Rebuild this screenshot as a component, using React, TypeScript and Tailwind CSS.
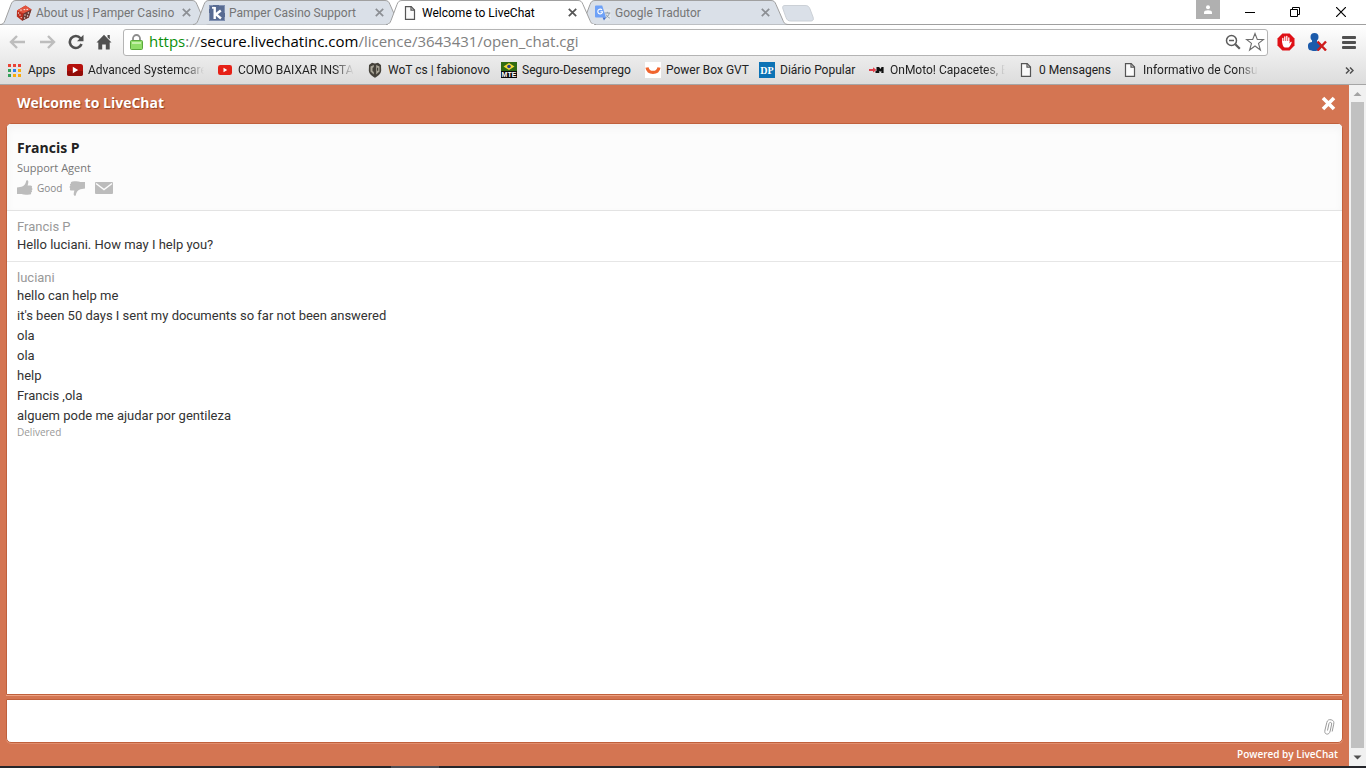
import React from "react";
import clsx from "clsx";

//---------------------
// ICONS
//---------------------
const DiceIcon = () => (
  <svg viewBox="0 0 16 16" className="h-4 w-4 shrink-0">
    <path d="M1 5.5 9.5.5 15.5 4.5 12.8 12.5 6.2 15.8 .8 11.5Z" fill="#b92c1d" />
    <path d="M1 5.5 9.5.5 15.5 4.5 7.5 8.5Z" fill="#e2553f" />
    <path d="M7.5 8.5 15.5 4.5 12.8 12.5 6.2 15.8Z" fill="#6b3a34" />
    <g fill="#f6e4e0">
      <ellipse cx="5" cy="5" rx="1.1" ry=".6" />
      <ellipse cx="8.4" cy="4.6" rx="1" ry=".6" />
      <ellipse cx="11.2" cy="4.3" rx="1" ry=".6" />
      <circle cx="2.5" cy="8" r=".7" />
      <circle cx="4" cy="10" r=".7" />
      <circle cx="5.2" cy="12.6" r=".7" />
      <circle cx="9" cy="10" r=".7" />
      <circle cx="12.4" cy="8" r=".7" />
      <circle cx="8.6" cy="13" r=".7" />
      <circle cx="11.6" cy="11" r=".7" />
    </g>
  </svg>
);

const KayakoIcon = () => (
  <svg viewBox="0 0 16 16" className="h-4 w-4 shrink-0">
    <rect width="16" height="16" rx="1" fill="#586b92" />
    <path d="M.500 4V.500H4M15.500 8V.500H10M.500 8v7.500h15V12" fill="none" stroke="#8292b3" />
    <path d="M5.700 2v12M11.800 5.500 7 9.300l5 4.200" fill="none" stroke="#fff" strokeWidth="2.400" />
    <path d="M3 2.800h3" stroke="#fff" strokeWidth="1.800" />
  </svg>
);

const PageIcon = () => (
  <svg viewBox="0 0 16 16" className="h-4 w-4 shrink-0" fill="none" stroke="#555" strokeWidth="1.2">
    <path d="M3.5 1.6h5.7l3.3 3.4v9.4h-9z" fill="#fafafa" />
    <path d="M9 1.6v3.6h3.5" />
  </svg>
);

const TranslateIcon = () => (
  <svg viewBox="0 0 16 16" className="h-4 w-4 shrink-0">
    <path d="M6.5 4.5H15a1 1 0 0 1 1 1v9a1 1 0 0 1-1 1H9.5z" fill="#e3e7ec" />
    <path d="M9.5 8h5.8M12.3 6.8V8M14.3 8c-.5 2.3-2 4-4 5M11 9.5c.8 1.7 2 2.8 3.8 3.6" fill="none" stroke="#8c9aa8" />
    <path d="M1 .5h6.2L11 12.5H1a1 1 0 0 1-1-1v-10a1 1 0 0 1 1-1z" fill="#6ea1f7" />
    <path d="M7.6 12.5H11l-2 3z" fill="#3f6fd0" />
    <path d="M7 4.9a2.4 2.4 0 1 0 .6 1.8H5.4" fill="none" stroke="#fff" strokeWidth="1.1" />
  </svg>
);

const AppsIcon = () => (
  <svg viewBox="0 0 13 13" className="h-[13px] w-[13px] shrink-0">
    <path d="M0 0h3v3H0zM5 0h3v3H5zM10 0h3v3h-3z" fill="#ea4335" />
    <path d="M0 5h3v3H0zM0 10h3v3H0z" fill="#34a05a" />
    <path d="M5 5h3v3H5z" fill="#2f80ed" />
    <path d="M10 5h3v3h-3zM5 10h3v3H5zM10 10h3v3h-3z" fill="#f9ab0c" />
  </svg>
);

const DarkTubeIcon = () => (
  <svg viewBox="0 0 16 12" className="h-3 w-4 shrink-0">
    <rect width="16" height="12" rx="2.5" fill="#b5100c" />
    <path d="M0 7h16v2.5A2.5 2.5 0 0 1 13.5 12h-11A2.5 2.5 0 0 1 0 9.5z" fill="#930b08" />
    <path d="M5.8 2.8v6.4l5.4-3.2z" fill="#fff" />
  </svg>
);

const TubeIcon = () => (
  <svg viewBox="0 0 16 16" className="h-4 w-4 shrink-0">
    <rect x="1" y="3" width="14" height="10" rx="2.2" fill="#e62117" />
    <path d="M6.5 5.8v4.4l3.7-2.2z" fill="#fff" />
  </svg>
);

const TanksIcon = () => (
  <svg viewBox="0 0 16 16" className="h-4 w-4 shrink-0">
    <path d="M2 3 5 .8l3 .8 3-.8L14 3l.2 5.5C14 12 10.500 14.500 8 15.800 5.500 14.500 2 12 1.800 8.500z" fill="#45423b" />
    <path d="M3.500 4.500 6.800 3v2L5.500 6v3l1.300 1v2.500L3.500 9.500zM9.200 3l3.300 1.500v5l-3.300 3z" fill="#aaa698" />
    <path d="M10.600 5.800v3" stroke="#45423b" strokeWidth="1.200" />
  </svg>
);

const MteIcon = () => (
  <svg viewBox="0 0 16 16" className="h-4 w-4 shrink-0">
    <rect width="16" height="9" fill="#2f6b12" />
    <path d="M8 1l5.500 3.500L8 8 2.500 4.500z" fill="#f5d936" />
    <circle cx="8" cy="4.500" r="1.800" fill="#283f8c" />
    <rect y="9" width="16" height="7" fill="#0a0a0a" />
    <text x="8" y="15" textAnchor="middle" fill="#fff" className="font-['Liberation_Sans',sans-serif] text-[7px] font-bold">MTE</text>
  </svg>
);

const GvtIcon = () => (
  <svg viewBox="0 0 16 16" className="h-4 w-4 shrink-0">
    <rect width="16" height="16" fill="#fff" />
    <path d="M2 5.500c1.200 6.600 10.800 6.600 12 0" fill="none" stroke="#f0652f" strokeWidth="3.200" />
  </svg>
);

const DpIcon = () => (
  <svg viewBox="0 0 16 16" className="h-4 w-4 shrink-0">
    <rect width="16" height="16" fill="#0b72b5" />
    <text x="8" y="12" textAnchor="middle" fill="#fff" className="font-['Liberation_Serif',serif] text-[10px] font-bold">DP</text>
  </svg>
);

const MotoIcon = () => (
  <svg viewBox="0 0 16 16" className="h-4 w-4 shrink-0">
    <path d="M0 7h4V5.300L7.500 8 4 10.500V9H0z" fill="#e0404a" />
    <path d="M7.500 5h2.700l1.200 2 1.200-2h2v6H12.300V8.800l-1 1-1-1V11H6.500V9h1z" fill="#111" />
  </svg>
);

const ThumbIcon = ({ down }: { down?: boolean }) => (
  <svg viewBox="0 0 16 16" className={clsx("h-4 w-4", down && "rotate-180")} fill="#bcbcbc">
    <path d="M0 7.500 4.500 6.800C7 6 8.800 4 9.200.8c.2-1 2-.8 2.100.7.1 1.500-.3 2.700-.7 3.900h2.800c2 0 2 1.900 1.300 2.500 1.200.6.9 2.100-.1 2.400.8.700.4 2-.6 2.200.5.900-.1 2-1.500 2.100-3.200.4-5.700.4-8-.5H0z" />
  </svg>
);

//---------------------
// DATA
//---------------------
const tabs = [
  { title: "About us | Pamper Casino", icon: <DiceIcon /> },
  { title: "Pamper Casino Support", icon: <KayakoIcon /> },
  { title: "Welcome to LiveChat", icon: <PageIcon />, active: true },
  { title: "Google Tradutor", icon: <TranslateIcon /> },
];

const bookmarks = [
  { title: "Apps", icon: <AppsIcon />, width: "w-[46px]", gap: "gap-[7px]" },
  { title: "Advanced Systemcare", icon: <DarkTubeIcon />, width: "w-[137px]", fade: true },
  { title: "COMO BAIXAR INSTA", icon: <TubeIcon />, width: "w-[137px]", fade: true },
  { title: "WoT cs | fabionovo", icon: <TanksIcon />, width: "w-[121px]" },
  { title: "Seguro-Desemprego", icon: <MteIcon />, width: "w-[131px]" },
  { title: "Power Box GVT", icon: <GvtIcon />, width: "w-[101px]" },
  { title: "Diário Popular", icon: <DpIcon />, width: "w-[97px]" },
  { title: "OnMoto! Capacetes, E", icon: <MotoIcon />, width: "w-[136px]", fade: true },
  { title: "0 Mensagens", icon: <PageIcon />, width: "w-[91px]" },
  { title: "Informativo de Consu", icon: <PageIcon />, width: "w-[137px]", fade: true },
];

const conversation = [
  { author: "Francis P", messages: ["Hello luciani. How may I help you?"] },
  {
    author: "luciani",
    messages: [
      "hello can help me",
      "it's been 50 days I sent my documents so far not been answered",
      "ola",
      "ola",
      "help",
      "Francis ,ola",
      "alguem pode me ajudar por gentileza",
    ],
    status: "Delivered",
  },
];

//---------------------
// BROWSER
//---------------------
const Tab = ({ title, icon, active }: { title: string; icon: React.ReactNode; active?: boolean }) => (
  <div className={clsx("relative -mr-[17px] flex h-[25px] w-[210px] items-center pr-4 pl-4", active && "z-10")}>
    <svg viewBox="0 0 210 25" preserveAspectRatio="none" className="absolute inset-0 h-full w-full">
      <path
        d="M0 24.500C3 24.500 4 23 5 20.500L11 4.500C12 2 13 .500 16 .500H192C195 .500 196 2 197 4.500L204 20.500C205 23 206 24.500 210 24.500"
        fill={active ? "#fff" : "#dae0e8"}
        stroke="#a0a0a0"
      />
      {active && <path d="M2 25h206" stroke="#fff" strokeWidth="2" />}
    </svg>
    <button role="tab" aria-selected={!!active} className={clsx("relative flex min-w-0 flex-1 items-center gap-1 text-left whitespace-nowrap", active ? "text-black" : "text-[#757575]")}>
      {icon}
      {title}
    </button>
    <button aria-label={"Close " + title} className="relative flex h-4 w-4 items-center justify-center">
      <svg viewBox="0 0 9 9" className="h-[9px] w-[9px]">
        <path d="M.8.8l7.400 7.400M8.200.8.8 8.200" stroke={active ? "#555" : "#8c8f94"} strokeWidth="1.700" />
      </svg>
    </button>
  </div>
);

const TabStrip = () => (
  <div className="flex h-[25px] items-start bg-white shadow-[inset_0_-1px_0_#a0a0a0]">
    <div role="tablist" className="flex">
      {tabs.map((tab) => (
        <Tab key={tab.title} {...tab} />
      ))}
    </div>
    <button aria-label="New tab" className="mt-[5px] ml-[9px]">
      <svg viewBox="0 0 34 17" className="h-[17px] w-[34px]">
        <path d="M4 .5h20c3 0 4 1 5 3.500l3 8c1 2.500 0 4-2 4H10c-3 0-4-1-5-3.500L2 4C1 1.500 2 .5 4 .5z" fill="#dae0e8" stroke="#cbd0d6" />
      </svg>
    </button>
    <div className="ml-auto flex pr-5">
      <button aria-label="Profile" className="mr-[25px] flex h-[19px] w-6 items-center justify-center bg-[#b0b0b0]">
        <svg viewBox="0 0 10 10" className="h-[10px] w-[10px]" fill="#fff">
          <circle cx="5" cy="2.200" r="2" />
          <path d="M1 9V7.500C1 6 2.500 5.300 5 5.300s4 .7 4 2.200V9z" />
        </svg>
      </button>
      <button aria-label="Minimize" className="mr-[35px] h-6">
        <svg viewBox="0 0 10 10" className="h-[10px] w-[10px]"><path d="M0 5.500h10" stroke="#000" /></svg>
      </button>
      <button aria-label="Restore" className="mr-9 h-6">
        <svg viewBox="0 0 10 10" className="h-[10px] w-[10px]" fill="none" stroke="#000"><path d="M.5 2.500h7v7h-7zM2.500 2V.5h7v7H8" /></svg>
      </button>
      <button aria-label="Close" className="h-6">
        <svg viewBox="0 0 10 10" className="h-[10px] w-[10px]"><path d="M0 0l10 10M10 0 0 10" stroke="#000" strokeWidth="1.200" /></svg>
      </button>
    </div>
  </div>
);

const Toolbar = () => (
  <div className="flex h-[31px] items-center px-[9px] pt-[3px]">
    <button aria-label="Back" className="mr-[13px]">
      <svg viewBox="0 0 17 14" className="h-[14px] w-[17px]" fill="none" stroke="#bdbdbd" strokeWidth="2.400"><path d="M8 1 2 7l6 6M2 7h14" /></svg>
    </button>
    <button aria-label="Forward" className="mr-3">
      <svg viewBox="0 0 17 14" className="h-[14px] w-[17px]" fill="none" stroke="#bdbdbd" strokeWidth="2.400"><path d="M9 1l6 6-6 6M15 7H1" /></svg>
    </button>
    <button aria-label="Reload" className="mr-3">
      <svg viewBox="0 0 16 16" className="h-4 w-4">
        <path d="M13.500 10A6 6 0 1 1 12.500 4.200" fill="none" stroke="#505050" strokeWidth="2.600" />
        <path d="M15.500.8V7.200H9z" fill="#505050" />
      </svg>
    </button>
    <button aria-label="Home" className="mr-[11px]">
      <svg viewBox="0 0 16 16" className="h-4 w-4" fill="#505050">
        <path d="M8 .8 15.500 8.500H13.700V15.500H9.800V10.500H6.200V15.500H2.300V8.500H.5z" />
        <path d="M11.500 1h2.300v4.500l-2.300-2.300z" />
      </svg>
    </button>
    <div className="flex h-[27px] min-w-0 flex-1 items-center rounded-[3px] border border-[#b4b4b4] bg-white pr-0.5 pl-[6px]">
      <svg viewBox="0 0 13 16" className="mr-1.5 h-4 w-[13px]">
        <path d="M3 7V4.500a3.500 3.500 0 0 1 7 0V7" fill="none" stroke="#8d8d8d" strokeWidth="1.800" />
        <rect x=".5" y="6.500" width="12" height="9" rx="1" fill="#8fdd68" stroke="#5aa83c" />
        <path d="M2 9h9" stroke="#c3f0a8" strokeWidth="2" />
      </svg>
      <div role="textbox" aria-label="Address" contentEditable suppressContentEditableWarning className="flex-1 pb-0.5 font-['Open_Sans',sans-serif] text-[15px] leading-5 whitespace-nowrap text-[#808080] outline-none">
        <span className="text-[#0b8f0b]">https</span>://<span className="text-black">secure.livechatinc.com</span>/licence/3643431/open_chat.cgi
      </div>
      <button aria-label="Zoom" className="mr-1">
        <svg viewBox="0 0 16 16" className="h-4 w-4" fill="none" stroke="#5c5c5c">
          <circle cx="6.500" cy="6.500" r="5" strokeWidth="1.500" />
          <path d="M4 6.500h5" strokeWidth="1.500" />
          <path d="M10.300 10.300l4.500 4.500" strokeWidth="2.200" />
        </svg>
      </button>
      <button aria-label="Bookmark this page">
        <svg viewBox="0 0 20 20" className="h-5 w-5">
          <path d="M10 1.500l2.300 6h6.200l-5 3.900 1.900 6.600-5.400-4-5.400 4 1.900-6.600-5-3.900h6.200z" fill="#fff" stroke="#6e6e6e" strokeWidth="1.100" />
        </svg>
      </button>
    </div>
    <button aria-label="Adblock" className="mr-3 ml-[9px]">
      <svg viewBox="0 0 18 18" className="h-[18px] w-[18px]">
        <path d="M5.400.5h7.200l4.900 4.900v7.200l-4.900 4.900H5.400L.5 12.600V5.400z" fill="#df1016" />
        <path d="M5.800 9V5.500M7.800 9V3.800M9.800 9V3.300M11.800 9V4.800" stroke="#fff" strokeWidth="1.300" strokeLinecap="round" />
        <path d="M5.200 8h7.200v2.500l1.200-1.500c.7-.5 1.300 0 1 .7-1 2.300-1.900 4.300-3.300 4.800H7.700C6 13.800 5.200 11.500 5.200 8z" fill="#fff" />
      </svg>
    </button>
    <button aria-label="Account" className="mr-[15px]">
      <svg viewBox="0 0 20 18" className="h-[18px] w-5">
        <circle cx="7.500" cy="4" r="4" fill="#1c5bab" />
        <path d="M5 7h5v2c4 .5 4 2 4 4.500 0 4-3 4.500-6.500 4.500S1 17.500 1 13.500C1 11 1.500 9.500 5 9z" fill="#1c5bab" />
        <path d="M10.500 8.500l8.500 9M19 8.500l-8.500 9" stroke="#cf1c1c" strokeWidth="2.400" />
      </svg>
    </button>
    <button aria-label="Menu" className="pr-px">
      <svg viewBox="0 0 14 13" className="h-[13px] w-[14px]"><path d="M1 1.500h12M1 6.500h12M1 11.500h12" stroke="#505050" strokeWidth="2.800" strokeLinecap="round" /></svg>
    </button>
  </div>
);

const BookmarksBar = () => (
  <nav className="flex h-7 items-center pr-3 pl-2">
    <div className="flex min-w-0 flex-1 gap-[13px] overflow-hidden">
      {bookmarks.map((item) => (
        <a key={item.title} href="#" className={clsx("flex h-4 shrink-0 items-center whitespace-nowrap", item.width, item.gap || "gap-[5px]")}>
          {item.icon}
          <span className={clsx("min-w-0 leading-4", item.fade && "overflow-hidden [mask-image:linear-gradient(to_left,transparent,black_20px)]")}>{item.title}</span>
        </a>
      ))}
    </div>
    <button aria-label="More bookmarks">
      <svg viewBox="0 0 9 7" className="h-[7px] w-[9px]" fill="none" stroke="#505050" strokeWidth="1.500"><path d="M1 .5l3 3-3 3M5 .5l3 3-3 3" /></svg>
    </button>
  </nav>
);

//---------------------
// CHAT
//---------------------
const AgentCard = () => (
  <div className="border-b border-[#e3e3e3] bg-[#fcfcfc] px-2.5 py-3 shadow-[inset_0_4px_8px_rgba(0,0,0,0.04)]">
    <h2 className="text-[14px] leading-6 font-bold text-[#222]">Francis P</h2>
    <p className="text-[11px] leading-4 text-[#777]">Support Agent</p>
    <div className="mt-0.5 flex h-5 items-center text-[10px] text-[#888]">
      <button className="mr-[7px] flex items-center gap-1">
        <ThumbIcon />
        Good
      </button>
      <button aria-label="Bad" className="mr-2.5">
        <ThumbIcon down />
      </button>
      <button aria-label="Email transcript">
        <svg viewBox="0 0 18 12" className="h-3 w-[18px]">
          <rect width="18" height="12" rx="1" fill="#bcbcbc" />
          <path d="M1 1.500l8 6 8-6" fill="none" stroke="#fcfcfc" strokeWidth="1.400" />
        </svg>
      </button>
    </div>
  </div>
);

const ChatWindow = () => (
  <main className="flex min-w-0 flex-1 flex-col bg-[#d47552] px-1.5 font-['Open_Sans','Noto_Sans',sans-serif]">
    <header className="flex h-[38px] shrink-0 items-center justify-between pr-[7px] pb-0.5 pl-[11px]">
      <h1 className="text-[14px] leading-5 font-bold text-white [text-shadow:1px_1px_1px_#8f4024]">Welcome to LiveChat</h1>
      <button aria-label="Close chat">
        <svg viewBox="0 0 15 15" className="h-[15px] w-[15px]"><path d="M2 2l11 11M13 2 2 13" stroke="#fff" strokeWidth="3.600" /></svg>
      </button>
    </header>
    <section className="flex-1 overflow-hidden rounded-t-[5px] border border-[#c0603c] bg-white shadow-[0_1px_0_#eda384]">
      <AgentCard />
      {conversation.map((block, index) => (
        <div key={block.author} className={clsx("px-2.5 pt-[7px]", index === 0 && "border-b border-[#e6e6e6] pb-[7px]")}>
          <p className="font-[Roboto,sans-serif] text-[13px] leading-[18px] text-[#999]">{block.author}</p>
          <div className="space-y-0.5 font-[Roboto,sans-serif] text-[13px] leading-[18px] text-[#333]">
            {block.messages.map((message, i) => (
              <p key={i}>{message}</p>
            ))}
          </div>
          {block.status && <p className="text-[10px] leading-[14px] text-[#999]">{block.status}</p>}
        </div>
      ))}
    </section>
    <div className="mt-1 flex h-11 shrink-0 rounded-b-[5px] border border-[#c0603c] bg-white shadow-[0_1px_0_#e08e6e]">
      <textarea aria-label="Message" className="flex-1 resize-none bg-transparent p-2 text-[13px] outline-none" />
      <button aria-label="Attach file" className="self-end pr-[7px] pb-[7px]">
        <svg viewBox="0 0 11 16" className="h-4 w-[11px]" fill="none" stroke="#9a9a9a">
          <path d="M3.500 11.500 5 4.500c.4-1.800 3-1.300 2.700.5L6.200 12c-.6 2.400-2 3.500-3.700 3C.8 14.500.5 13 1 11L2.800 3.500C3.400 1 5 .3 7.200.8 9.700 1.400 10.200 3 9.700 5.200L8.200 12.500" />
        </svg>
      </button>
    </div>
    <footer className="flex h-[23px] shrink-0 items-center justify-end pr-[5px] text-[10px]">
      <a href="#" className="font-semibold text-white">Powered by LiveChat</a>
    </footer>
  </main>
);

const Scrollbar = () => (
  <div aria-hidden className="flex w-[17px] shrink-0 flex-col items-center bg-[#f1f1f1]">
    <svg viewBox="0 0 17 17" className="h-[17px] w-[17px]"><path d="M4.500 11 8.500 7l4 4z" fill="#a3a3a3" /></svg>
    <div className="w-[13px] flex-1 bg-[#c1c1c1]" />
    <svg viewBox="0 0 17 17" className="h-[18px] w-[17px]"><path d="M4.500 7l4 4 4-4z" fill="#505050" /></svg>
  </div>
);

export default function App() {
  return (
    <div className="flex h-screen flex-col bg-white font-[Roboto,sans-serif] text-[12px] text-[#222]">
      <TabStrip />
      <div className="border-b border-[#a5a5a5] bg-linear-to-b from-white to-[#dcdcdc]">
        <Toolbar />
        <BookmarksBar />
      </div>
      <div className="flex min-h-0 flex-1">
        <ChatWindow />
        <Scrollbar />
      </div>
      <div className="flex h-0.5 shrink-0 bg-[#25262b]">
        <div className="ml-[391px] w-12 bg-[#4d4d54]" />
      </div>
    </div>
  );
}
